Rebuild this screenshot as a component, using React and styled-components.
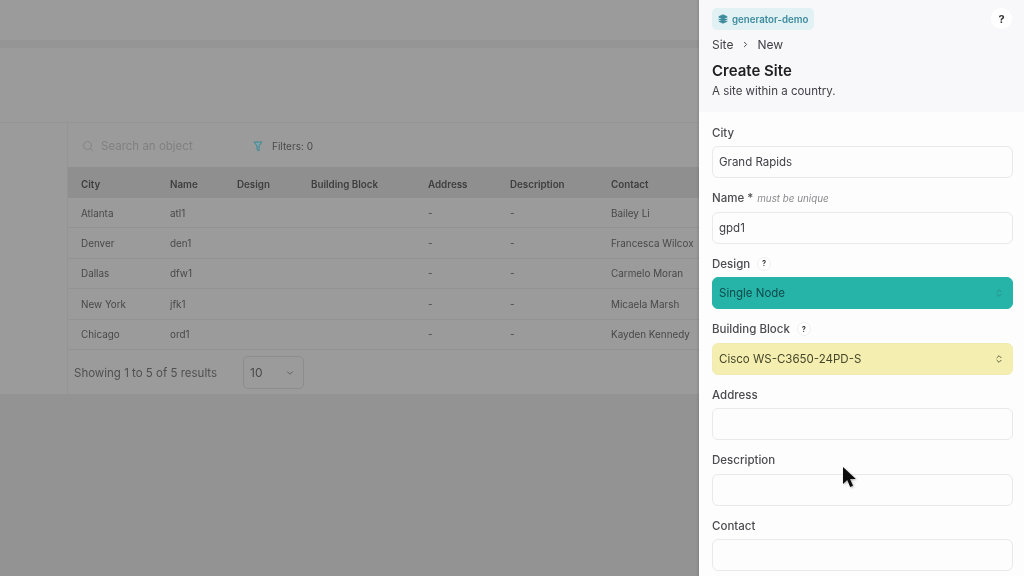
import React from "react";
import styled, { createGlobalStyle } from "styled-components";
import { Search, ChevronRight, ChevronDown, ChevronsUpDown, Layers } from "lucide-react";

const Global = createGlobalStyle`
  html, body { margin: 0; padding: 0; height: 100%; overflow: hidden; background: #9a9a9a; }
  body { font-family: Inter, "Liberation Sans", sans-serif; }
  * { box-sizing: border-box; }
`;

const Page = styled.div`
  position: relative;
  display: flex;
  width: 1024px;
  height: 576px;
  overflow: hidden;
`;
const Backdrop = styled.div`
  width: 699px;
  display: flex;
  flex-direction: column;
  background: #939393;
  filter: blur(0.4px);
`;
const TopBar = styled.div`
  height: 40px;
  background: #9b9b9b;
`;
const Strip = styled.div`
  height: 8px;
  background: #959595;
`;
const Hero = styled.div`
  height: 75px;
  background: #9b9b9b;
  border-bottom: 1px solid #959595;
`;
const Body = styled.div`
  height: 271px;
  display: flex;
  background: #9b9b9b;
`;
const Side = styled.div`
  width: 68px;
  flex: none;
  border-right: 1px solid #959595;
`;
const TableWrap = styled.div`
  flex: 1;
  display: flex;
  flex-direction: column;
  min-width: 0;
`;
const SearchBar = styled.div`
  height: 44px;
  display: flex;
  align-items: center;
  padding: 2px 0 0 14px;
  font-size: 11px;
  color: #7b7b7b;
`;
const SearchText = styled.span`
  margin-left: 7px;
  width: 152px;
  font-size: 11.5px;
  color: #808080;
`;
const FilterText = styled.span`
  margin-left: 9px;
  font-size: 10px;
  color: #4a4a4a;
`;
const Row = styled.div`
  display: grid;
  grid-template-columns: 89px 67px 74px 117px 82px 101px 1fr;
  align-items: center;
  height: ${p => (p.$head ? "31px" : "30.4px")};
  padding: ${p => (p.$head ? "4px 0 0 13px" : "0 0 0 13px")};
  font-size: ${p => (p.$head ? "9.8px" : "9.9px")};
  font-weight: ${p => (p.$head ? 600 : 400)};
  color: ${p => (p.$head ? "#3e3e3e" : "#484848")};
  background: ${p => (p.$head ? "#8f8f8f" : "transparent")};
  border-bottom: ${p => (p.$head ? "none" : "1px solid #939393")};
  white-space: nowrap;
`;
const Footer = styled.div`
  flex: 1;
  display: flex;
  align-items: center;
  padding: 2px 0 0 6px;
  font-size: 11.5px;
  color: #505050;
`;
const PageSize = styled.div`
  margin-left: 26px;
  width: 61px;
  height: 33px;
  display: flex;
  align-items: center;
  justify-content: space-between;
  padding: 0 8px 0 6px;
  border: 1px solid #8d8d8d;
  border-radius: 5px;
  font-size: 12px;
  color: #4a4a4a;
`;

const Panel = styled.aside`
  width: 325px;
  flex: none;
  background: #fdfdfd;
  box-shadow: -1px 0 2px rgba(0,0,0,.12);
  filter: blur(0.3px);
`;
const Head = styled.header`
  height: 112px;
  padding: 8px 13px 0;
  background: #f8f8fa;
  position: relative;
`;
const Badge = styled.div`
  display: inline-flex;
  align-items: center;
  gap: 4px;
  height: 22px;
  padding: 0 6px;
  border-radius: 5px;
  background: #e1f1f4;
  color: #3d8b9c;
  font-size: 9.7px;
  font-weight: 600;
`;
const Help = styled.div`
  position: absolute;
  top: 8px;
  right: 12px;
  width: 21px;
  height: 21px;
  border-radius: 50%;
  background: #fff;
  display: flex;
  align-items: center;
  justify-content: center;
  font-size: 11px;
  font-weight: 700;
  color: #333;
`;
const Crumbs = styled.div`
  margin-top: 6px;
  display: flex;
  align-items: center;
  gap: 7.5px;
  height: 17px;
  font-size: 12px;
  color: #3f3f46;
`;
const Title = styled.h1`
  margin: 8px 0 0;
  font-size: 15px;
  line-height: 20px;
  font-weight: 600;
  color: #1f1f23;
`;
const Sub = styled.p`
  margin: 2px 0 0;
  font-size: 11.5px;
  line-height: 16px;
  color: #3f3f46;
`;
const Form = styled.div`
  padding: 13px 11px 0 13px;
  display: flex;
  flex-direction: column;
`;
const Field = styled.div`
  height: 65.5px;
  display: flex;
  flex-direction: column;
`;
const Label = styled.div`
  height: 21px;
  padding-bottom: 6px;
  display: flex;
  align-items: center;
  gap: 6px;
  font-size: 11.5px;
  font-weight: 500;
  color: #4b4b50;
`;
const Hint = styled.em`
  margin-left: -2px;
  font-size: 9.8px;
  font-weight: 400;
  color: #8a8a8f;
`;
const Tip = styled.span`
  width: 14px;
  height: 14px;
  margin-left: 1px;
  border-radius: 50%;
  background: #fff;
  border: 1px solid #f0f0f2;
  display: flex;
  align-items: center;
  justify-content: center;
  font-size: 7.5px;
  font-weight: 700;
  color: #444;
`;
const Control = styled.div`
  height: 32px;
  display: flex;
  align-items: center;
  justify-content: space-between;
  padding: 0 8px 0 6px;
  border-radius: 6px;
  border: 1px solid ${p => p.$border || "#e9e9ec"};
  background: ${p => p.$bg || "#fdfdfd"};
  font-size: 11.5px;
  color: ${p => p.$color || "#3f3f46"};
`;
const Cursor = styled.svg`
  position: absolute;
  left: 842px;
  top: 466px;
  filter: drop-shadow(1px 1px 1px rgba(0,0,0,.3));
`;

const rows = [
  ["Atlanta", "atl1", "Bailey Li"],
  ["Denver", "den1", "Francesca Wilcox"],
  ["Dallas", "dfw1", "Carmelo Moran"],
  ["New York", "jfk1", "Micaela Marsh"],
  ["Chicago", "ord1", "Kayden Kennedy"],
];

const FunnelIcon = () => (
  <svg width="10" height="11" viewBox="0 0 10 11" fill="none">
    <path d="M1 1h8L6 5v5L4 8.6V5z" fill="#7fa5aa" stroke="#3f8792" strokeWidth="1" strokeLinejoin="round" />
  </svg>
);

export default function App() {
  return (
    <Page>
      <Global />
      <Backdrop>
        <TopBar />
        <Strip />
        <Hero />
        <Body>
          <Side />
          <TableWrap>
            <SearchBar>
              <Search size={12} color="#858585" />
              <SearchText>Search an object</SearchText>
              <FunnelIcon />
              <FilterText>Filters: 0</FilterText>
            </SearchBar>
            <Row $head>
              <span>City</span><span>Name</span><span>Design</span><span>Building Block</span>
              <span>Address</span><span>Description</span><span>Contact</span>
            </Row>
            {rows.map(r => (
              <Row key={r[1]}>
                <span>{r[0]}</span><span>{r[1]}</span><span /><span />
                <span>-</span><span>-</span><span>{r[2]}</span>
              </Row>
            ))}
            <Footer>
              Showing 1 to 5 of 5 results
              <PageSize>10<ChevronDown size={10} color="#555" /></PageSize>
            </Footer>
          </TableWrap>
        </Body>
      </Backdrop>
      <Panel>
        <Head>
          <Badge><Layers size={10} fill="#3d8b9c" />generator-demo</Badge>
          <Help>?</Help>
          <Crumbs>Site <ChevronRight size={9} strokeWidth={2.5} /> New</Crumbs>
          <Title>Create Site</Title>
          <Sub>A site within a country.</Sub>
        </Head>
        <Form>
          <Field><Label>City</Label><Control>Grand Rapids</Control></Field>
          <Field><Label>Name * <Hint>must be unique</Hint></Label><Control>gpd1</Control></Field>
          <Field>
            <Label>Design <Tip>?</Tip></Label>
            <Control $bg="#26b3a8" $border="#26b3a8" $color="#0f4a4a">
              Single Node <ChevronsUpDown size={10} color="#2a8580" />
            </Control>
          </Field>
          <Field>
            <Label>Building Block <Tip>?</Tip></Label>
            <Control $bg="#f4efb0" $border="#f0ebb0" $color="#45452a">
              Cisco WS-C3650-24PD-S <ChevronsUpDown size={10} color="#45452a" />
            </Control>
          </Field>
          <Field><Label>Address</Label><Control /></Field>
          <Field><Label>Description</Label><Control /></Field>
          <Field><Label>Contact</Label><Control /></Field>
        </Form>
      </Panel>
      <Cursor width="16" height="24" viewBox="0 0 16 24">
        <path d="M1 1v17l4.2-4 3 7 2.8-1.2-3-6.8h5.8z" fill="#0c0c0c" />
      </Cursor>
    </Page>
  );
}
